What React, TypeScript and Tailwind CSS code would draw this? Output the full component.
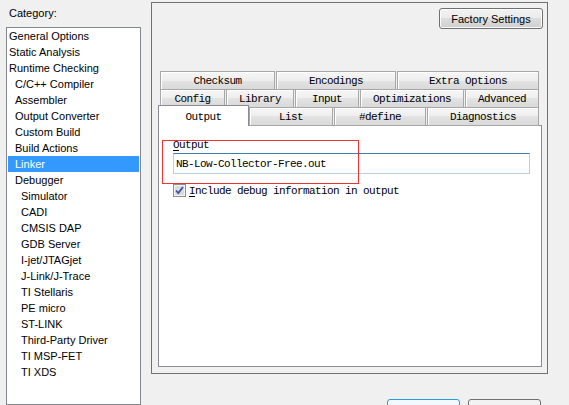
import React from "react";

const sans = { fontFamily: '"Liberation Sans", Arial, sans-serif' } as const;
const mono = { fontFamily: '"Liberation Mono", "Courier New", monospace' } as const;

const items: [string, number][] = [
  ["General Options", 0],
  ["Static Analysis", 0],
  ["Runtime Checking", 0],
  ["C/C++ Compiler", 1],
  ["Assembler", 1],
  ["Output Converter", 1],
  ["Custom Build", 1],
  ["Build Actions", 1],
  ["Linker", 1],
  ["Debugger", 1],
  ["Simulator", 2],
  ["CADI", 2],
  ["CMSIS DAP", 2],
  ["GDB Server", 2],
  ["I-jet/JTAGjet", 2],
  ["J-Link/J-Trace", 2],
  ["TI Stellaris", 2],
  ["PE micro", 2],
  ["ST-LINK", 2],
  ["Third-Party Driver", 2],
  ["TI MSP-FET", 2],
  ["TI XDS", 2],
];

const indent = ["pl-[1px]", "pl-[7px]", "pl-[13px]"];

const tabBg =
  "bg-[linear-gradient(to_bottom,#f6f6f6_0%,#eeeeee_50%,#e3e3e3_50%,#d9d9d9_100%)]";

function Tab({ label, w }: { label: string; w: string }) {
  return (
    <div
      className={`${w} h-[19px] shrink-0 border border-[#a7a7a7] ${tabBg} flex items-center justify-center shadow-[inset_1px_1px_0_#ffffff]`}
    >
      <span className="text-[11px] leading-[12px] tracking-[-0.6px] text-black" style={mono}>
        {label}
      </span>
    </div>
  );
}

export default function App() {
  return (
    <div
      className="w-[569px] h-[405px] bg-[#f0f0f0] overflow-hidden relative flex text-black"
      style={sans}
    >
      {/* Left column */}
      <div className="ml-[6px] w-[135px] shrink-0 flex flex-col">
        <div className="pt-[5px] pl-[3px] h-[21px] text-[11px] leading-[16px]">Category:</div>
        <div className="mt-[6px] h-[400px] border border-[#828790] bg-white">
          {items.map(([name, lvl]) => {
            const sel = name === "Linker";
            return (
              <div
                key={name}
                className={`mx-[1px] h-[16px] text-[11px] leading-[16px] whitespace-nowrap ${indent[lvl]} ${
                  sel ? "bg-[#3399ff] text-white" : "text-black"
                }`}
              >
                {name}
              </div>
            );
          })}
        </div>
      </div>

      {/* Right column */}
      <div className="ml-[10px] w-[397px] shrink-0 pt-[2px] flex flex-col">
        <div className="h-[372px] border border-[#717171] flex flex-col pt-[5px] pb-[6px]">
          <div className="flex justify-end pr-[4px]">
            <div className="w-[104px] h-[21px] rounded-[3px] border border-[#707070] bg-[linear-gradient(to_bottom,#f2f2f2_0%,#ebebeb_50%,#dddddd_50%,#cfcfcf_100%)] flex items-center justify-center text-[11px] leading-[12px] shadow-[inset_0_0_0_1px_#fcfcfc]">
              Factory Settings
            </div>
          </div>

          {/* Tabs */}
          <div className="mt-[42px] flex flex-col">
            <div className="flex gap-[1px] pl-[8px]">
              <Tab label="Checksum" w="w-[115px]" />
              <Tab label="Encodings" w="w-[120px]" />
              <Tab label="Extra Options" w="w-[142px]" />
            </div>
            <div className="flex gap-[1px] pl-[8px] -mt-px">
              <Tab label="Config" w="w-[65px]" />
              <Tab label="Library" w="w-[68px]" />
              <Tab label="Input" w="w-[64px]" />
              <Tab label="Optimizations" w="w-[104px]" />
              <Tab label="Advanced" w="w-[74px]" />
            </div>
            <div className="flex items-end pl-[6px] -mt-[3px] h-[21px] relative z-10">
              <div className="w-[91px] h-[21px] shrink-0 bg-white border border-b-0 border-[#898c95] flex items-start justify-center pt-[5px]">
                <span className="text-[11px] leading-[12px] tracking-[-0.6px]" style={mono}>
                  Output
                </span>
              </div>
              <Tab label="List" w="w-[84px]" />
              <div className="ml-[1px]">
                <Tab label="#define" w="w-[92px]" />
              </div>
              <div className="ml-[1px]">
                <Tab label="Diagnostics" w="w-[112px]" />
              </div>
            </div>
          </div>

          {/* Panel */}
          <div className="ml-[6px] mr-[5px] -mt-px h-[242px] border border-[#898c95] bg-white flex flex-col pt-[13px] pl-[14px] pr-[11px]">
            <div className="text-[11px] leading-[12px] tracking-[-0.6px]" style={mono}>
              <span className="underline underline-offset-2">O</span>utput
            </div>
            <div className="mt-[2px] h-[21px] border border-[#b5cfe7] border-t-[#3c7fb1] flex items-center pl-[2px]">
              <span className="text-[11px] leading-[12px] tracking-[-0.6px] whitespace-nowrap" style={mono}>
                NB-Low-Collector-Free.out
              </span>
            </div>
            <div className="mt-[10px] flex items-center h-[13px]">
              <svg width="13" height="13" viewBox="0 0 13 13" className="shrink-0">
                <rect x="0.5" y="0.5" width="12" height="12" fill="#f4f4f4" stroke="#8f8f8f" />
                <rect x="1.5" y="1.5" width="10" height="10" fill="#dcdcdc" stroke="#f4f4f4" />
                <path d="M3 6.5 L5.3 9 L10 3" fill="none" stroke="#3355aa" strokeWidth="1.8" />
              </svg>
              <div
                className="ml-[3px] text-[11px] leading-[12px] tracking-[-0.6px] whitespace-nowrap"
                style={mono}
              >
                <span className="underline underline-offset-2">I</span>nclude debug information in output
              </div>
            </div>
          </div>
        </div>

        {/* Bottom buttons */}
        <div className="mt-[25px] flex justify-end gap-[8px] pr-[7px]">
          <div className="w-[73px] h-[23px] rounded-[3px] border border-[#26a0da] bg-[linear-gradient(to_bottom,#f4f9fd,#e5f1fb)]" />
          <div className="w-[73px] h-[23px] rounded-[3px] border border-[#707070] bg-[linear-gradient(to_bottom,#f2f2f2,#ebebeb)]" />
        </div>
      </div>

      {/* Red annotation rectangle */}
      <div className="absolute left-[162px] top-[140px] w-[197px] h-[44px] border border-[#ee3333] pointer-events-none" />
    </div>
  );
}
